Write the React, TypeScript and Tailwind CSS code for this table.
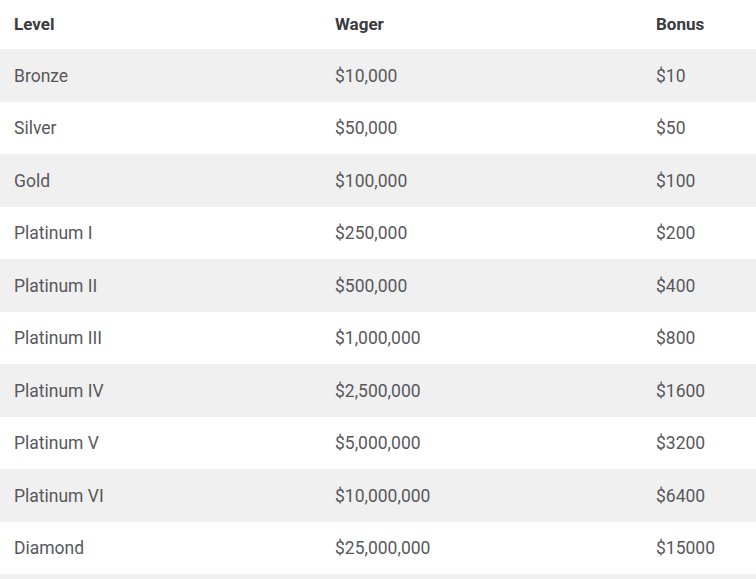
import React from 'react';

const ROWS = [
    ['Bronze', '$10,000', '$10'],
    ['Silver', '$50,000', '$50'],
    ['Gold', '$100,000', '$100'],
    ['Platinum I', '$250,000', '$200'],
    ['Platinum II', '$500,000', '$400'],
    ['Platinum III', '$1,000,000', '$800'],
    ['Platinum IV', '$2,500,000', '$1600'],
    ['Platinum V', '$5,000,000', '$3200'],
    ['Platinum VI', '$10,000,000', '$6400'],
    ['Diamond', '$25,000,000', '$15000'],
];

export default function App() {
    return (
        <div className="w-[756px] h-[579px] overflow-hidden bg-white font-['Roboto',sans-serif]">
            {/* Header */}
            <div className="grid grid-cols-[321px_321px_1fr] h-[49px] items-center text-[17px] font-bold text-[#3a3a3f]">
                <div className="pl-[14px]">Level</div>
                <div className="pl-[14px]">Wager</div>
                <div className="pl-[14px]">Bonus</div>
            </div>

            {ROWS.map((row, i) => (
                <div
                    key={row[0]}
                    className={`grid grid-cols-[321px_321px_1fr] h-[52.5px] items-center text-[17.5px] text-[#58585c] ${i % 2 === 0 ? 'bg-[#f0f0f0]' : 'bg-white'}`}
                >
                    <div className="pl-[14px] pt-[1px]">{row[0]}</div>
                    <div className="pl-[14px] pt-[1px]">{row[1]}</div>
                    <div className="pl-[14px] pt-[1px]">{row[2]}</div>
                </div>
            ))}

            <div className="h-[20px] bg-[#f0f0f0]" />
        </div>
    );
}
